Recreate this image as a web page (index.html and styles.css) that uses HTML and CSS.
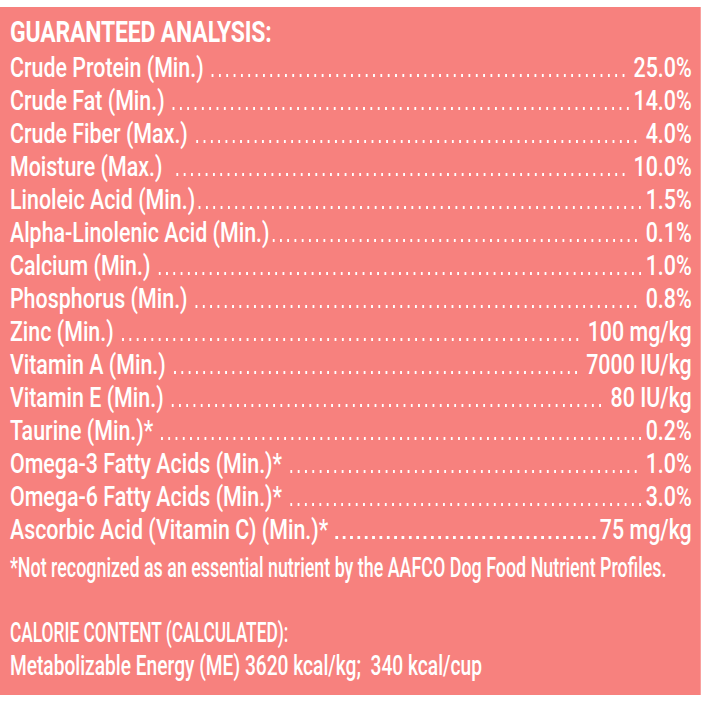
FILE: index.html
```html
<!DOCTYPE html>
<html lang="en">
<head>
<meta charset="utf-8">
<title>Guaranteed Analysis</title>
<link rel="stylesheet" href="styles.css">
</head>
<body>
<div class="frame">
<section class="panel">
  <h1 class="title">GUARANTEED ANALYSIS:</h1>
  <ul class="rows">
    <li class="row"><span class="label">Crude Protein (Min.)</span><span class="lead l1 r1"></span><span class="val">25.0%</span></li>
    <li class="row"><span class="label">Crude Fat (Min.)</span><span class="lead l1 r0"></span><span class="val">14.0%</span></li>
    <li class="row"><span class="label">Crude Fiber (Max.)</span><span class="lead l1 r1"></span><span class="val">4.0%</span></li>
    <li class="row"><span class="label">Moisture (Max.)</span><span class="lead l2 r1"></span><span class="val">10.0%</span></li>
    <li class="row"><span class="label">Linoleic Acid (Min.)</span><span class="lead l0 r0"></span><span class="val">1.5%</span></li>
    <li class="row"><span class="label">Alpha-Linolenic Acid (Min.)</span><span class="lead l0 r1"></span><span class="val">0.1%</span></li>
    <li class="row"><span class="label">Calcium (Min.)</span><span class="lead l1 r0"></span><span class="val">1.0%</span></li>
    <li class="row"><span class="label">Phosphorus (Min.)</span><span class="lead l1 r1"></span><span class="val">0.8%</span></li>
    <li class="row"><span class="label">Zinc (Min.)</span><span class="lead l1 r1"></span><span class="val">100 mg/kg</span></li>
    <li class="row"><span class="label">Vitamin A (Min.)</span><span class="lead l1 r1"></span><span class="val">7000 IU/kg</span></li>
    <li class="row"><span class="label">Vitamin E (Min.)</span><span class="lead l1 r1"></span><span class="val">80 IU/kg</span></li>
    <li class="row"><span class="label">Taurine (Min.)*</span><span class="lead l1 r0"></span><span class="val">0.2%</span></li>
    <li class="row"><span class="label">Omega-3 Fatty Acids (Min.)*</span><span class="lead l1 r1"></span><span class="val">1.0%</span></li>
    <li class="row"><span class="label">Omega-6 Fatty Acids (Min.)*</span><span class="lead l1 r0"></span><span class="val">3.0%</span></li>
    <li class="row"><span class="label">Ascorbic Acid (Vitamin C) (Min.)*</span><span class="lead l1 r0"></span><span class="val">75 mg/kg</span></li>
  </ul>
  <p class="note"><span class="squeeze note-text">*Not recognized as an essential nutrient by the AAFCO Dog Food Nutrient Profiles.</span></p>
  <p class="cal-title"><span class="squeeze cal-title-text">CALORIE CONTENT (CALCULATED):</span></p>
  <p class="cal"><span class="squeeze cal-text">Metabolizable Energy (ME) 3620 kcal/kg;&nbsp; 340 kcal/cup</span></p>
</section>
</div>
</body>
</html>
```

FILE: styles.css
```css
html, body {
  margin: 0;
  padding: 0;
  overflow: hidden;
  background: #ffffff;
}

body {
  font-family: Roboto, "Liberation Sans", sans-serif;
  color: #ffffff;
}

.frame {
  width: 701px;
  height: 702px;
  padding-top: 7px;
  box-sizing: border-box;
  overflow: hidden;
}

.panel {
  box-sizing: border-box;
  width: 916px;
  height: 688px;
  padding: 8px 11.75px 0 13px;
  background: #f7817e;
  transform: scaleX(0.765);
  transform-origin: 0 0;
}

.title {
  margin: 0 0 2px;
  font-size: 30px;
  line-height: 34px;
  font-weight: 700;
  letter-spacing: -0.2px;
}

.rows {
  list-style: none;
  margin: 0;
  padding: 0;
}

.row {
  display: flex;
  align-items: baseline;
  font-size: 28px;
  line-height: 33px;
  font-weight: 500;
  white-space: nowrap;
}

.label, .val {
  flex: none;
}

.lead {
  flex: 1 1 auto;
  height: 3px;
  background-image: linear-gradient(to right, transparent 3px, #ffffff 3px, #ffffff 6.5px, transparent 6.5px);
  background-size: 9.54px 3px;
  background-repeat: round no-repeat;
  background-position: left bottom;
}

.l0 { margin-left: 1px; }
.l1 { margin-left: 7px; }
.l2 { margin-left: 15px; }
.r0 { margin-right: 2px; }
.r1 { margin-right: 8px; }

.note, .cal-title, .cal {
  font-size: 28px;
  line-height: 33px;
  font-weight: 500;
  white-space: nowrap;
}

.note {
  margin: 5px 0 0;
}

.cal-title {
  margin: 32px 0 0;
}

.cal {
  margin: 0;
}

.squeeze {
  display: inline-block;
  transform-origin: 0 50%;
}

.note-text {
  transform: scaleX(0.835);
}

.cal-title-text {
  transform: scaleX(0.81);
}

.cal-text {
  transform: scaleX(0.895);
}
```
